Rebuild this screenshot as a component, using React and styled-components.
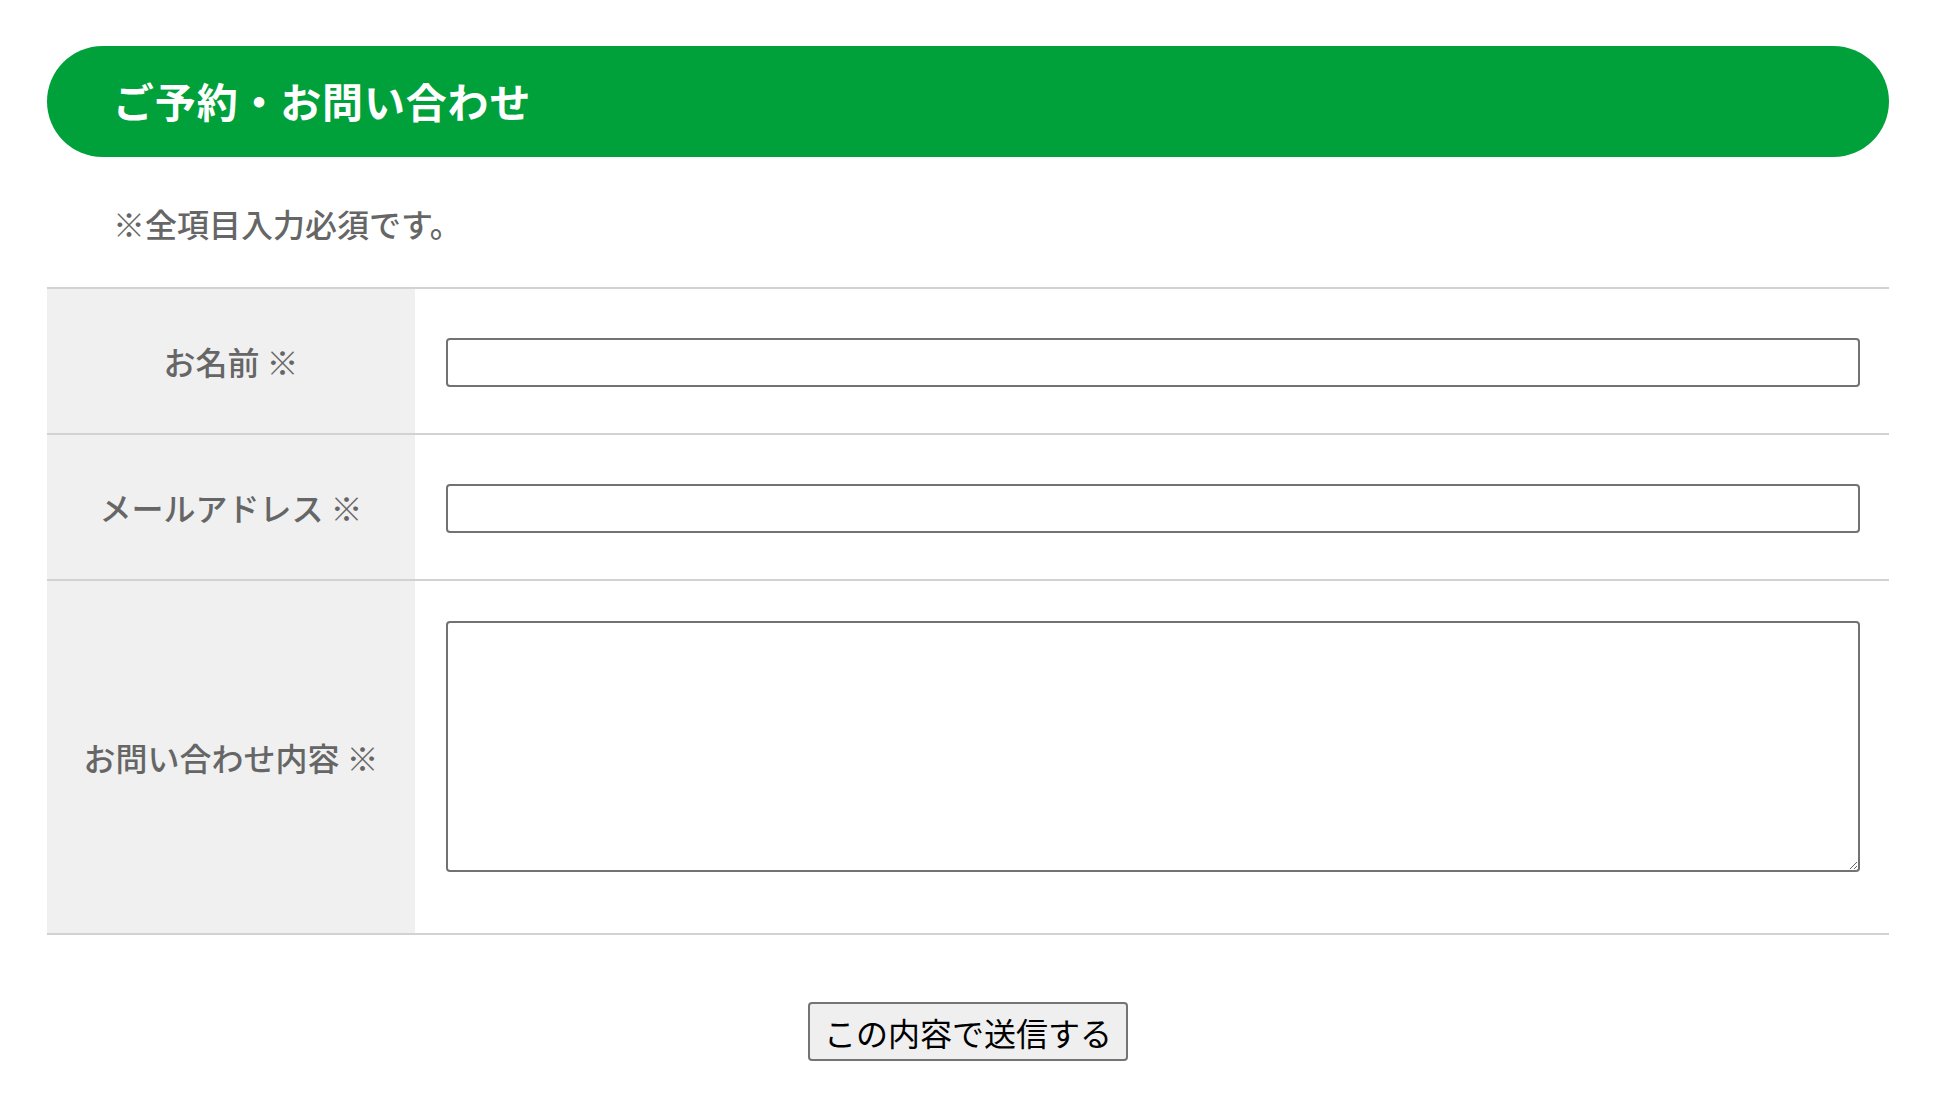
import React from 'react';
import styled, { createGlobalStyle } from 'styled-components';

const GlobalStyle = createGlobalStyle`
  html, body {
    margin: 0;
    padding: 0;
    background: #fff;
  }
  body {
    font-family: "Noto Sans CJK JP", "Noto Sans", sans-serif;
  }
  * {
    box-sizing: border-box;
  }
`;

const Page = styled.div`
  padding: 46px 46px 40px 47px;
`;

const Heading = styled.h2`
  display: flex;
  align-items: center;
  height: 111px;
  margin: 0;
  padding: 0 0 4px 66px;
  background: #00a13b;
  border-radius: 56px;
  color: #fff;
  font-size: 41px;
  font-weight: 700;
  letter-spacing: 0.02em;
`;

const Note = styled.p`
  margin: 0;
  padding: 44px 0 41px 66px;
  font-size: 32px;
  font-weight: 500;
  line-height: 45px;
  color: #666;
`;

const Table = styled.div`
  border-top: 2px solid #d2d2d2;
`;

const Row = styled.div`
  display: grid;
  grid-template-columns: 368px 1fr;
  border-bottom: 2px solid #d2d2d2;
`;

const Label = styled.div`
  display: flex;
  align-items: center;
  justify-content: center;
  background: #f0f0f0;
  font-size: 32px;
  font-weight: 500;
  color: #666;
`;

const Field = styled.div`
  display: flex;
  align-items: ${p => (p.$tall ? 'flex-start' : 'center')};
  padding: ${p => (p.$tall ? '40px 29px 61px 31px' : '49px 29px 46px 31px')};
`;

const Input = styled.input`
  width: 100%;
  height: 49px;
  border: 2px solid #727272;
  border-radius: 4px;
  background: #fff;
  font-size: 24px;
  padding: 0 8px;
  font-family: inherit;
`;

const TextArea = styled.textarea`
  display: block;
  width: 100%;
  height: 251px;
  border: 2px solid #727272;
  border-radius: 4px;
  background: #fff;
  font-size: 24px;
  padding: 8px;
  font-family: inherit;
  resize: vertical;
`;

const Actions = styled.div`
  display: flex;
  justify-content: center;
  padding-top: 67px;
`;

const SubmitButton = styled.button`
  height: 59px;
  padding: 0 14px;
  border: 2px solid #747474;
  border-radius: 4px;
  background: #efefef;
  color: #000;
  font-family: "Noto Sans CJK JP", sans-serif;
  font-size: 32px;
  line-height: 1;
  cursor: pointer;
`;

const fields = [
  { id: 'name', label: 'お名前 ※', type: 'text' },
  { id: 'email', label: 'メールアドレス ※', type: 'email' },
  { id: 'message', label: 'お問い合わせ内容 ※', multiline: true },
];

const App = () => {
  return (
    <>
      <GlobalStyle />
      <Page>
        <Heading>ご予約・お問い合わせ</Heading>
        <Note>※全項目入力必須です。</Note>
        <Table>
          {fields.map(field => (
            <Row key={field.id}>
              <Label>{field.label}</Label>
              <Field $tall={field.multiline}>
                {field.multiline ? (
                  <TextArea name={field.id} />
                ) : (
                  <Input type={field.type} name={field.id} />
                )}
              </Field>
            </Row>
          ))}
        </Table>
        <Actions>
          <SubmitButton type="button">この内容で送信する</SubmitButton>
        </Actions>
      </Page>
    </>
  );
};

export default App;
